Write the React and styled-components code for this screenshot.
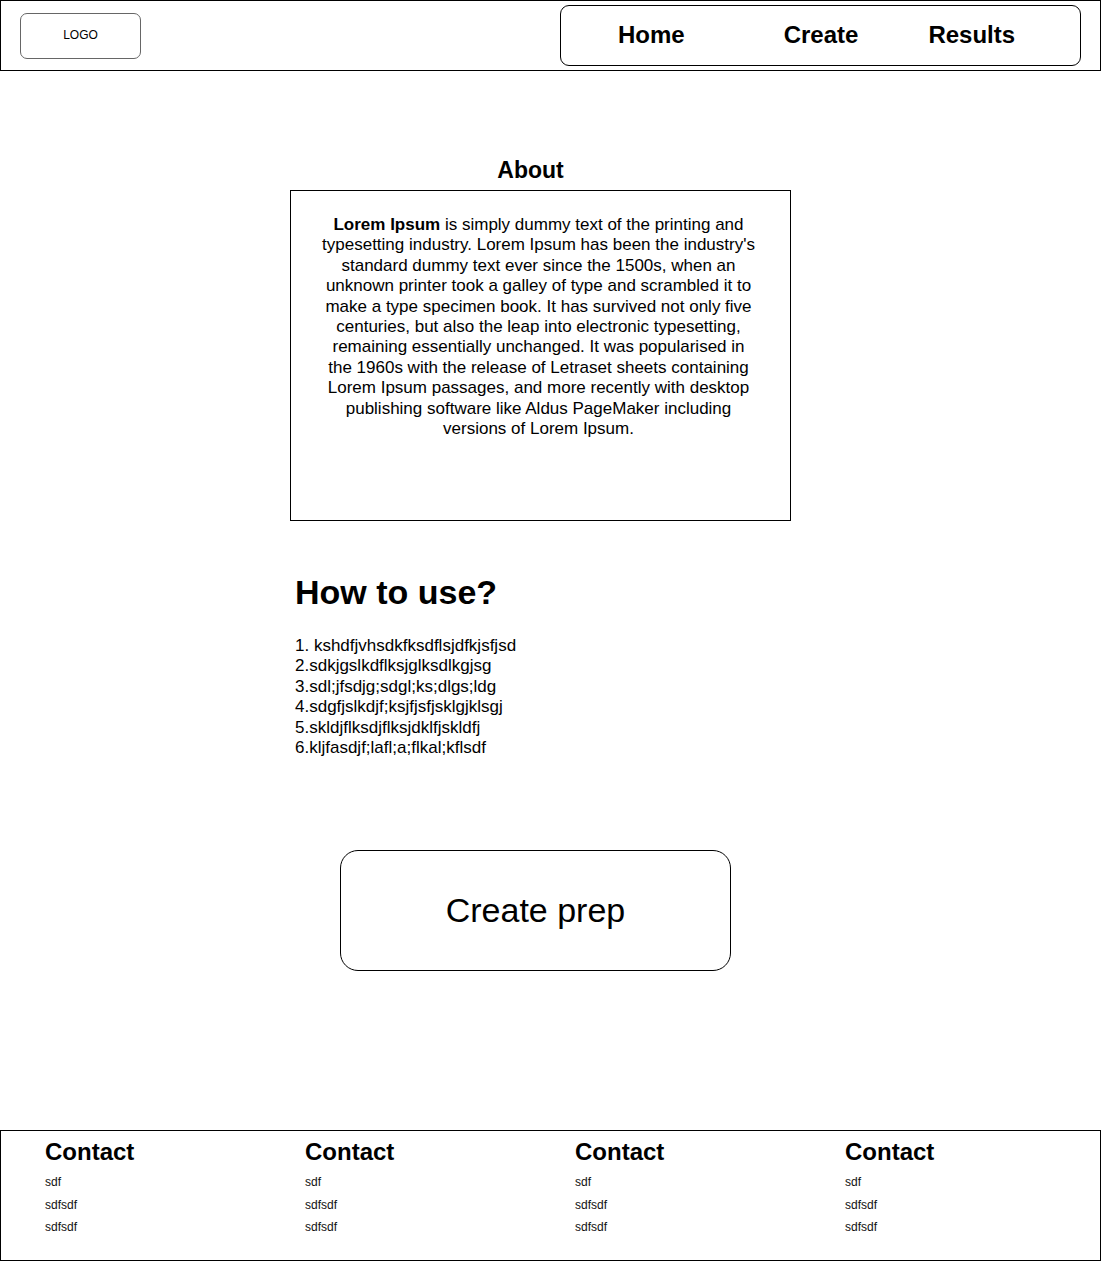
import React from "react";
import styled, { createGlobalStyle } from "styled-components";

const Global = createGlobalStyle`
  html, body { margin: 0; padding: 0; background: #fff; }
  body { font-family: "Liberation Sans", Arial, sans-serif; color: #000; }
  * { box-sizing: border-box; }
`;

const Page = styled.div`
  width: 1101px;
  display: flex;
  flex-direction: column;
`;

const Header = styled.header`
  height: 71px;
  border: 1px solid #000;
  display: flex;
  align-items: center;
  justify-content: space-between;
  padding: 0 19px;
`;

const Logo = styled.div`
  width: 121px;
  height: 46px;
  border: 1px solid #666;
  border-radius: 7px;
  display: flex;
  align-items: center;
  justify-content: center;
  font-size: 12px;
  padding-bottom: 1px;
`;

const Nav = styled.nav`
  width: 521px;
  height: 61px;
  border: 1px solid #000;
  border-radius: 9px;
  display: flex;
  align-items: center;
  padding-left: 57px;
  padding-bottom: 2px;
`;

const NavLink = styled.a`
  font-size: 24px;
  font-weight: bold;
  margin-left: ${(p) => p.$gap || 0}px;
  color: #000;
  text-decoration: none;
`;

const Main = styled.main`
  padding-left: 290px;
  display: flex;
  flex-direction: column;
`;

const AboutTitle = styled.h2`
  margin: 85px 0 0 0;
  width: 481px;
  text-align: center;
  font-size: 23px;
  line-height: 28px;
  font-weight: bold;
  height: 34px;
`;

const AboutBox = styled.section`
  width: 501px;
  height: 331px;
  border: 1px solid #000;
  padding: 24px 32px 0 28px;
  text-align: center;
  font-size: 17px;
  line-height: 20.4px;
`;

const HowTitle = styled.h1`
  margin: 51px 0 0 5px;
  font-size: 34px;
  line-height: 40px;
  font-weight: bold;
`;

const Steps = styled.div`
  margin: 24px 0 0 5px;
  font-size: 17px;
  line-height: 20.4px;
`;

const CreateButton = styled.button`
  margin: 92px 0 0 50px;
  width: 391px;
  height: 121px;
  border: 1px solid #000;
  border-radius: 18px;
  background: #fff;
  font-family: "Liberation Sans", Arial, sans-serif;
  font-size: 34px;
  color: #000;
  padding: 0;
  cursor: pointer;
`;

const Footer = styled.footer`
  margin-top: 159px;
  height: 131px;
  border: 1px solid #000;
  display: grid;
  grid-template-columns: 260px 270px 270px 1fr;
  padding-left: 44px;
  padding-top: 6px;
`;

const Column = styled.div`
  display: flex;
  flex-direction: column;
`;

const ColTitle = styled.h3`
  margin: 0 0 4px 0;
  font-size: 24px;
  line-height: 30px;
  font-weight: bold;
`;

const ColItem = styled.div`
  font-size: 12px;
  line-height: 22.5px;
  color: #111;
`;

const steps = [
  "1. kshdfjvhsdkfksdflsjdfkjsfjsd",
  "2.sdkjgslkdflksjglksdlkgjsg",
  "3.sdl;jfsdjg;sdgl;ks;dlgs;ldg",
  "4.sdgfjslkdjf;ksjfjsfjsklgjklsgj",
  "5.skldjflksdjflksjdklfjskldfj",
  "6.kljfasdjf;lafl;a;flkal;kflsdf",
];

export default function App() {
  return (
    <Page>
      <Global />
      <Header>
        <Logo>LOGO</Logo>
        <Nav>
          <NavLink>Home</NavLink>
          <NavLink $gap={99}>Create</NavLink>
          <NavLink $gap={70}>Results</NavLink>
        </Nav>
      </Header>
      <Main>
        <AboutTitle>About</AboutTitle>
        <AboutBox>
          <b>Lorem Ipsum</b> is simply dummy text of the printing and
          typesetting industry. Lorem Ipsum has been the industry's standard
          dummy text ever since the 1500s, when an unknown printer took a
          galley of type and scrambled it to make a type specimen book. It has
          survived not only five centuries, but also the leap into electronic
          typesetting, remaining essentially unchanged. It was popularised in
          the 1960s with the release of Letraset sheets containing Lorem Ipsum
          passages, and more recently with desktop publishing software like
          Aldus PageMaker including versions of Lorem Ipsum.
        </AboutBox>
        <HowTitle>How to use?</HowTitle>
        <Steps>
          {steps.map((s) => (
            <div key={s}>{s}</div>
          ))}
        </Steps>
        <div>
          <CreateButton>Create prep</CreateButton>
        </div>
      </Main>
      <Footer>
        {[0, 1, 2, 3].map((i) => (
          <Column key={i}>
            <ColTitle>Contact</ColTitle>
            <ColItem>sdf</ColItem>
            <ColItem>sdfsdf</ColItem>
            <ColItem>sdfsdf</ColItem>
          </Column>
        ))}
      </Footer>
    </Page>
  );
}
